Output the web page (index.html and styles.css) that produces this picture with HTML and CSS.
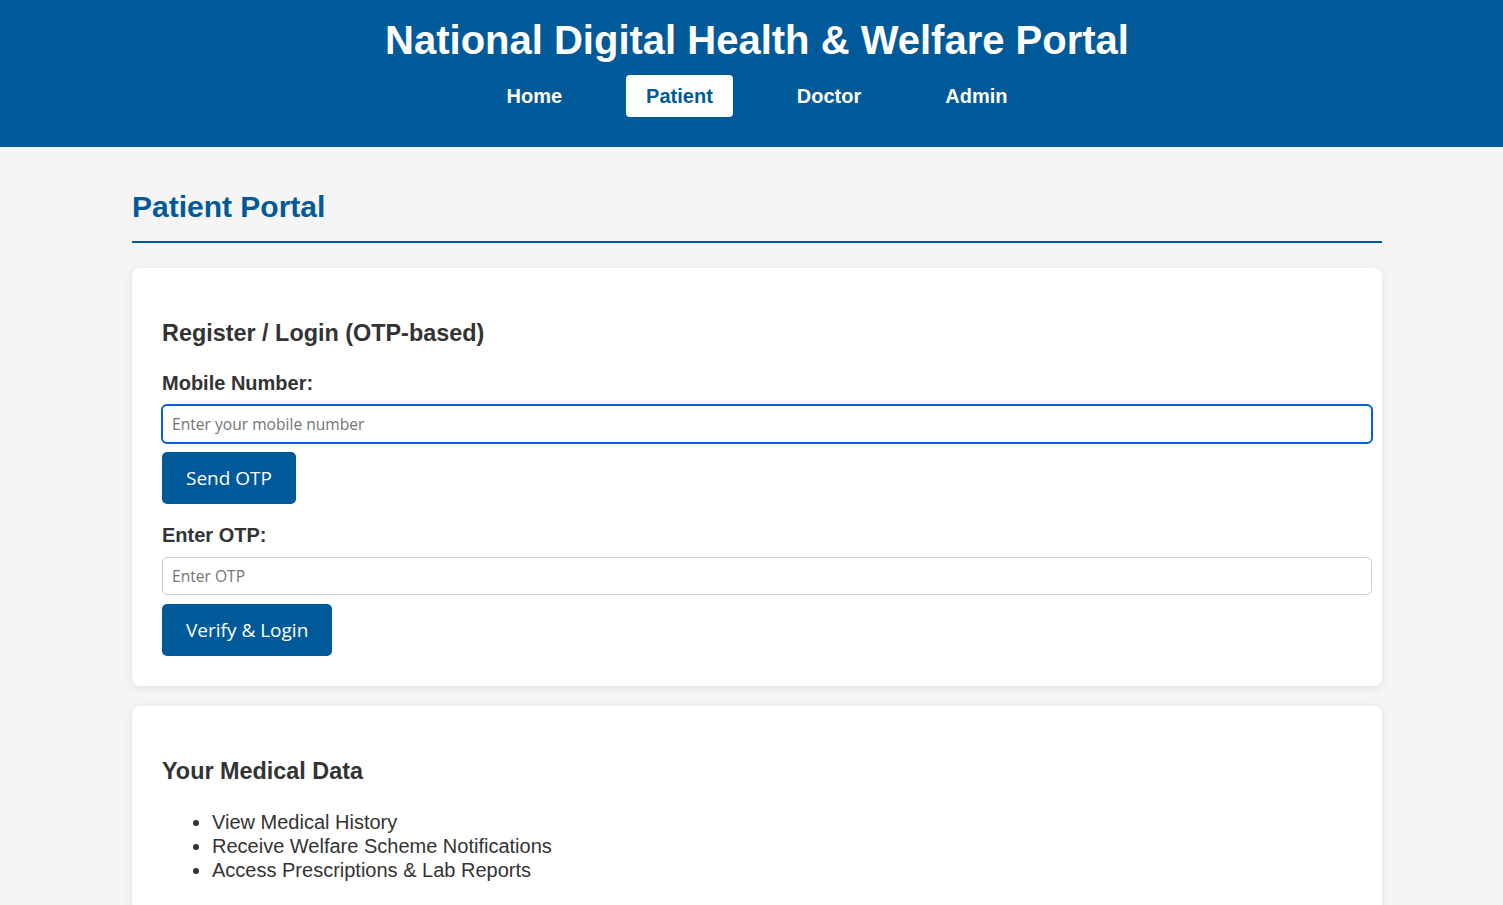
FILE: index.html
```html
<!DOCTYPE html>
<html lang="en">
<head>
<meta charset="utf-8">
<title>National Digital Health &amp; Welfare Portal</title>
<link rel="stylesheet" href="styles.css">
</head>
<body>
<header class="site-header">
  <h1 class="site-title">National Digital Health &amp; Welfare Portal</h1>
  <nav class="main-nav">
    <a class="nav-link" href="#">Home</a>
    <a class="nav-link nav-link--active" href="#">Patient</a>
    <a class="nav-link" href="#">Doctor</a>
    <a class="nav-link" href="#">Admin</a>
  </nav>
</header>
<main class="page">
  <div class="container">
    <h2 class="page-title">Patient Portal</h2>

    <section class="card">
      <h3 class="card-title">Register / Login (OTP-based)</h3>
      <div class="field">
        <label class="field-label" for="mobile">Mobile Number:</label>
        <input class="field-input field-input--focused" id="mobile" type="text" placeholder="Enter your mobile number">
        <button class="btn" type="button">Send OTP</button>
      </div>
      <div class="field">
        <label class="field-label" for="otp">Enter OTP:</label>
        <input class="field-input" id="otp" type="text" placeholder="Enter OTP">
        <button class="btn" type="button">Verify &amp; Login</button>
      </div>
    </section>

    <section class="card">
      <h3 class="card-title">Your Medical Data</h3>
      <ul class="feature-list">
        <li>View Medical History</li>
        <li>Receive Welfare Scheme Notifications</li>
        <li>Access Prescriptions &amp; Lab Reports</li>
      </ul>
    </section>
  </div>
</main>
</body>
</html>
```

FILE: styles.css
```css
* { box-sizing: border-box; }

html, body {
  margin: 0;
  padding: 0;
}

body {
  font-family: "Liberation Sans", Arial, sans-serif;
  font-size: 20px;
  color: #333333;
  background: #f5f5f5;
}

.site-header {
  background: #005a9a;
  color: #ffffff;
  padding: 18px 0 30px 11px;
  text-align: center;
}

.site-title {
  margin: 0 0 12px;
  font-size: 40px;
  font-weight: bold;
}

.main-nav {
  display: flex;
  justify-content: center;
  gap: 44px;
}

.nav-link {
  display: block;
  padding: 10px 20px;
  line-height: 22px;
  font-size: 20px;
  font-weight: bold;
  color: #ffffff;
  text-decoration: none;
  border-radius: 4px;
}

.nav-link--active {
  background: #ffffff;
  color: #005a9a;
}

.page {
  padding: 43px 0 40px 11px;
}

.container {
  width: 1250px;
  margin: 0 auto;
}

.page-title {
  margin: 0 0 25px;
  padding-bottom: 17px;
  font-size: 30px;
  color: #005a9a;
  border-bottom: 2px solid #005a9a;
}

.card {
  background: #ffffff;
  border-radius: 8px;
  box-shadow: 0 2px 8px rgba(0, 0, 0, 0.09);
  padding: 30px;
  margin-bottom: 20px;
}

.card-title {
  font-size: 23.4px;
  margin: 22px 0 25px;
}

.field {
  display: flex;
  flex-direction: column;
  align-items: flex-start;
  margin-bottom: 20px;
}

.field:last-child {
  margin-bottom: 0;
}

.field-label {
  display: block;
  font-weight: bold;
  margin-bottom: 10px;
}

.field-input {
  box-sizing: content-box;
  width: 100%;
  height: 20px;
  padding: 8px 9px;
  font-family: "Open Sans", "Noto Sans", sans-serif;
  font-size: 15.6px;
  line-height: 20px;
  color: #333333;
  border: 1px solid #cccccc;
  border-radius: 5px;
  margin-bottom: 9px;
  background: #ffffff;
}

.field-input::placeholder {
  color: #757575;
}

.field-input--focused {
  outline: 2px solid #0b5fd6;
  outline-offset: -1px;
}

.btn {
  height: 52px;
  padding: 0 24px;
  font-family: "Open Sans", "Noto Sans", sans-serif;
  font-size: 19px;
  color: #ffffff;
  background: #005a9a;
  border: none;
  border-radius: 5px;
  cursor: pointer;
}

.feature-list {
  margin: 0;
  padding-left: 50px;
  line-height: 24px;
}
```
